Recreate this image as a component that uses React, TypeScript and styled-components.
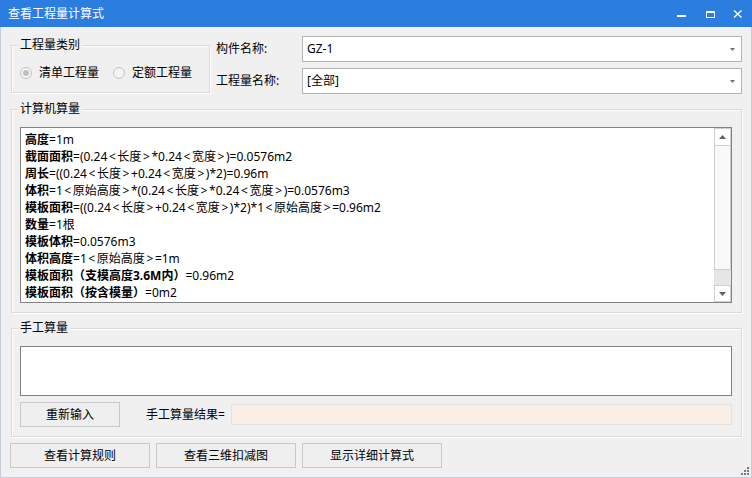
import React from 'react';
import styled, { createGlobalStyle } from 'styled-components';

const GlobalStyle = createGlobalStyle`
  html, body { margin: 0; padding: 0; background: #f0f0f0; }
  body {
    font-family: "Noto Sans", "Noto Sans CJK SC", sans-serif;
    font-size: 12px;
    color: #000;
  }
  * { box-sizing: border-box; }
`;

const Window = styled.div`
  position: relative;
  width: 752px;
  height: 478px;
  background: #f0f0f0;
  display: flex;
  flex-direction: column;
  overflow: hidden;
`;

const TitleBar = styled.div`
  height: 27px;
  flex: none;
  background: #2b7de0;
  color: #fff;
  display: flex;
  align-items: center;
  padding-left: 8px;
`;

const Title = styled.span`
  flex: 1;
  font-size: 12px;
  line-height: 16px;
`;

const Controls = styled.div`
  display: flex;
  height: 100%;
`;

const CtrlBtn = styled.div`
  width: 28px;
  display: flex;
  align-items: center;
  justify-content: center;
`;

const Body = styled.div`
  flex: 1;
  border: 1px solid #c5cdd7;
  border-top: none;
  padding: 9px 9px 0 10px;
  display: flex;
  flex-direction: column;
`;

const TopRow = styled.div`
  display: flex;
  align-items: flex-start;
`;

const GroupBox = styled.div<{ $h: number; $mt: number; $w?: number }>`
  position: relative;
  flex: none;
  width: ${p => (p.$w ? `${p.$w}px` : 'auto')};
  height: ${p => p.$h}px;
  margin-top: ${p => p.$mt}px;
  border: 1px solid #dadada;
  box-shadow: inset 1px 1px 0 #fdfdfd, 1px 1px 0 #fdfdfd;
  padding: 17px 9px 9px 8px;
  display: flex;
  flex-direction: column;
`;

const Legend = styled.span`
  position: absolute;
  top: -9px;
  left: 6px;
  padding: 0 2px;
  line-height: 16px;
  background: #f0f0f0;
`;

const RadioRow = styled.div`
  display: flex;
  align-items: center;
  gap: 14px;
  margin-top: 2px;
  line-height: 16px;
`;

const RadioItem = styled.label`
  display: flex;
  align-items: center;
  gap: 7px;
`;

const RadioCircle = styled.span<{ $on?: boolean }>`
  width: 12px;
  height: 12px;
  border-radius: 50%;
  border: 1px solid #c2c2c2;
  background: #f4f4f4;
  display: flex;
  align-items: center;
  justify-content: center;
  &::after {
    content: '';
    display: ${p => (p.$on ? 'block' : 'none')};
    width: 6px;
    height: 6px;
    border-radius: 50%;
    background: #c0c0c0;
  }
`;

const FieldGrid = styled.div`
  flex: 1;
  margin-left: 6px;
  display: grid;
  grid-template-columns: 86px 1fr;
  grid-auto-rows: 26px;
  row-gap: 6px;
  align-items: center;
`;

const FieldLabel = styled.span`
  line-height: 16px;
`;

const Combo = styled.div`
  height: 26px;
  background: #fff;
  border: 1px solid #b4b4b4;
  display: flex;
  align-items: center;
  padding: 0 6px 0 4px;
  line-height: 16px;
`;

const ComboText = styled.span`
  flex: 1;
`;

const TextPane = styled.div<{ $h: number }>`
  height: ${p => p.$h}px;
  flex: none;
  background: #fff;
  border: 1px solid #828282;
  display: flex;
`;

const Lines = styled.div`
  flex: 1;
  padding: 3px 4px;
  line-height: 17px;
  white-space: nowrap;
  overflow: hidden;
`;

const Line = styled.div``;

const Key = styled.b`
  font-weight: 700;
`;

const Bracket = styled.span`
  padding: 0 1.6px;
`;

const ScrollBar = styled.div`
  width: 17px;
  flex: none;
  display: flex;
  flex-direction: column;
  background: #e6e6e6;
`;

const ScrollBtn = styled.div<{ $h: number }>`
  height: ${p => p.$h}px;
  flex: none;
  background: #fff;
  border: 1px solid #cfcfcf;
  display: flex;
  align-items: center;
  justify-content: center;
`;

const Thumb = styled.div`
  height: 124px;
  flex: none;
  background: #f9f9f9;
  border: 1px solid #cdcdcd;
  border-top: none;
`;

const Track = styled.div`
  flex: 1;
`;

const ActionRow = styled.div`
  display: flex;
  align-items: center;
  margin-top: 6px;
`;

const Button = styled.div<{ $w: number }>`
  width: ${p => p.$w}px;
  height: 25px;
  flex: none;
  border: 1px solid #c9c9c9;
  background: #efefef;
  display: flex;
  align-items: center;
  justify-content: center;
  line-height: 16px;
`;

const ResultLabel = styled.span`
  margin-left: 26px;
  line-height: 16px;
`;

const ResultField = styled.div`
  flex: 1;
  height: 21px;
  margin-left: 6px;
  background: #f9efe6;
  border: 1px solid #e2e2e2;
`;

const BottomButtons = styled.div`
  display: flex;
  gap: 6px;
  margin-top: 6px;
  margin-left: -1px;
`;

const Grip = styled.svg`
  position: absolute;
  right: 3px;
  bottom: 3px;
`;

const Arrow = ({ down }: { down?: boolean }) => (
  <svg width="7" height="4" viewBox="0 0 7 4">
    <polygon points={down ? '0,0 7,0 3.5,4' : '0,4 7,4 3.5,0'} fill="#606060" />
  </svg>
);

const ComboArrow = () => (
  <svg width="5" height="3" viewBox="0 0 5 3">
    <polygon points="0,0 5,0 2.5,3" fill="#707070" />
  </svg>
);

const renderValue = (v: string) =>
  v.split(/([<>])/).map((part, i) =>
    part === '<' || part === '>' ? <Bracket key={i}>{part}</Bracket> : <React.Fragment key={i}>{part}</React.Fragment>
  );

type Seg = [string, string];
const lines: Seg[] = [
  ['高度', '=1m'],
  ['截面面积', '=(0.24<长度>*0.24<宽度>)=0.0576m2'],
  ['周长', '=((0.24<长度>+0.24<宽度>)*2)=0.96m'],
  ['体积', '=1<原始高度>*(0.24<长度>*0.24<宽度>)=0.0576m3'],
  ['模板面积', '=((0.24<长度>+0.24<宽度>)*2)*1<原始高度>=0.96m2'],
  ['数量', '=1根'],
  ['模板体积', '=0.0576m3'],
  ['体积高度', '=1<原始高度>=1m'],
  ['模板面积（支模高度3.6M内）', '=0.96m2'],
  ['模板面积（按含模量）', '=0m2'],
];

export default function App() {
  return (
    <>
      <GlobalStyle />
      <Window>
        <TitleBar>
          <Title>查看工程量计算式</Title>
          <Controls>
            <CtrlBtn>
              <svg width="10" height="10" viewBox="0 0 10 10">
                <rect x="0" y="6" width="9" height="2" fill="#fff" />
              </svg>
            </CtrlBtn>
            <CtrlBtn>
              <svg width="10" height="10" viewBox="0 0 10 10">
                <rect x="1" y="2" width="8" height="6" fill="none" stroke="#fff" strokeWidth="1" transform="translate(0.5 0.5)" />
                <rect x="1" y="2" width="9" height="2" fill="#fff" />
              </svg>
            </CtrlBtn>
            <CtrlBtn>
              <svg width="10" height="10" viewBox="0 0 10 10">
                <path d="M1 1.5 L8.5 8.5 M8.5 1.5 L1 8.5" stroke="#fff" strokeWidth="1.4" />
              </svg>
            </CtrlBtn>
          </Controls>
        </TitleBar>
        <Body>
          <TopRow>
            <GroupBox $h={48} $mt={9} $w={199}>
              <Legend>工程量类别</Legend>
              <RadioRow>
                <RadioItem>
                  <RadioCircle $on />
                  清单工程量
                </RadioItem>
                <RadioItem>
                  <RadioCircle />
                  定额工程量
                </RadioItem>
              </RadioRow>
            </GroupBox>
            <FieldGrid>
              <FieldLabel>构件名称:</FieldLabel>
              <Combo>
                <ComboText>GZ-1</ComboText>
                <ComboArrow />
              </Combo>
              <FieldLabel>工程量名称:</FieldLabel>
              <Combo>
                <ComboText>[全部]</ComboText>
                <ComboArrow />
              </Combo>
            </FieldGrid>
          </TopRow>

          <GroupBox $h={204} $mt={15}>
            <Legend>计算机算量</Legend>
            <TextPane $h={176}>
              <Lines>
                {lines.map(([k, v], i) => (
                  <Line key={i}>
                    <Key>{k}</Key>
                    {renderValue(v)}
                  </Line>
                ))}
              </Lines>
              <ScrollBar>
                <ScrollBtn $h={18}>
                  <Arrow />
                </ScrollBtn>
                <Thumb />
                <Track />
                <ScrollBtn $h={17}>
                  <Arrow down />
                </ScrollBtn>
              </ScrollBar>
            </TextPane>
          </GroupBox>

          <GroupBox $h={109} $mt={15}>
            <Legend>手工算量</Legend>
            <TextPane $h={50} />
            <ActionRow>
              <Button $w={100}>重新输入</Button>
              <ResultLabel>手工算量结果=</ResultLabel>
              <ResultField />
            </ActionRow>
          </GroupBox>

          <BottomButtons>
            <Button $w={140}>查看计算规则</Button>
            <Button $w={140}>查看三维扣减图</Button>
            <Button $w={140}>显示详细计算式</Button>
          </BottomButtons>
        </Body>
        <Grip width="8" height="8" viewBox="0 0 8 8">
          <rect x="6" y="0" width="2" height="2" fill="#7a7a7a" />
          <rect x="3" y="3" width="2" height="2" fill="#7a7a7a" />
          <rect x="6" y="3" width="2" height="2" fill="#7a7a7a" />
          <rect x="0" y="6" width="2" height="2" fill="#7a7a7a" />
          <rect x="3" y="6" width="2" height="2" fill="#7a7a7a" />
          <rect x="6" y="6" width="2" height="2" fill="#7a7a7a" />
        </Grip>
      </Window>
    </>
  );
}
